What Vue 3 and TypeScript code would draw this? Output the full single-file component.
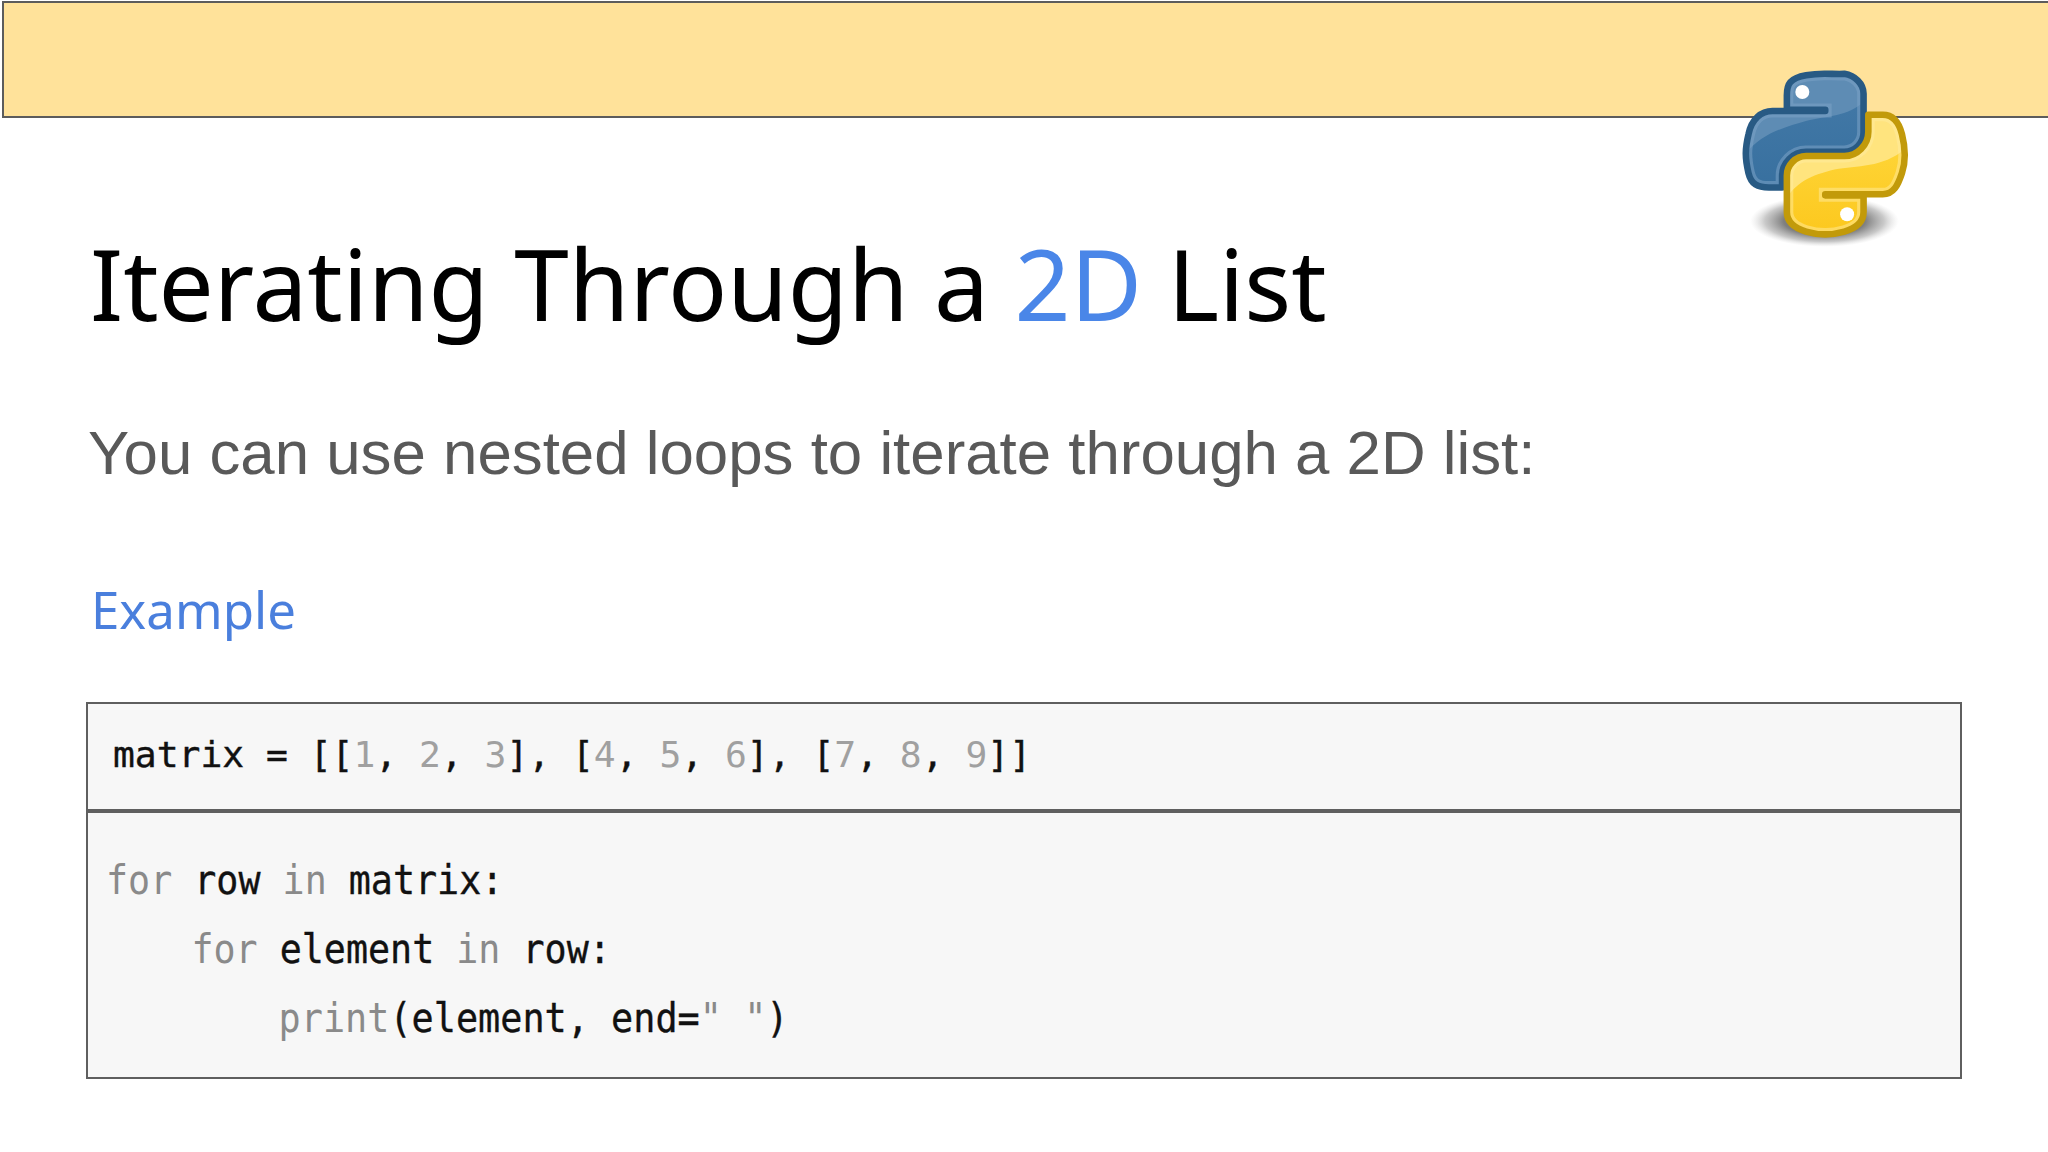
<script setup lang="ts">
const blue = "M54.92 0C50.34.02 45.96.41 42.11 1.09 30.76 3.1 28.7 7.29 28.7 15.03v10.22h26.81v.8H18.64c-7.79 0-14.62 5.5-16.75 16.2-2.46 10.21-2.57 16.59 0 27.25 1.91 7.94 6.46 10 14.25 10h9.22v-8.25c0-8.85 7.66-16.66 16.75-16.66h26.78c7.45 0 13.41-6.14 13.41-13.62V14.03c0-7.27-6.13-12.72-13.41-13.94C64.28.33 59.5-.02 54.92 0Z";
const yellow = "M85.64 28.66v11.9c0 9.23-7.83 17-16.75 17H42.11c-7.34 0-13.41 6.28-13.41 13.63v25.53c0 7.27 6.32 11.54 13.41 13.62 8.49 2.5 16.63 2.95 26.78 0 6.75-1.95 13.41-5.88 13.41-13.62V85H55.52v-.8h40.19c7.79 0 10.7-6.54 13.41-14.7 2.8-8.4 2.74-16.48 0-27.25-1.93-7.76-5.6-13.59-13.41-13.59Z";
</script>

<template>
  <main class="slide">
    <div class="banner"></div>
    <svg class="logo" viewBox="-4 -4 118 130" aria-hidden="true">
      <defs>
        <clipPath id="cb"><path :d="blue" /></clipPath>
        <clipPath id="cy"><path :d="yellow" /></clipPath>
        <radialGradient id="sh" cx="50%" cy="50%" r="50%">
          <stop offset="0" stop-color="#555" />
          <stop offset=".55" stop-color="#808080" />
          <stop offset=".8" stop-color="#bbb" stop-opacity=".8" />
          <stop offset="1" stop-color="#ddd" stop-opacity="0" />
        </radialGradient>
        <linearGradient id="gb" x1="0" y1="0" x2="0" y2="1">
          <stop offset="0" stop-color="#447aa8" />
          <stop offset="1" stop-color="#38709f" />
        </linearGradient>
        <linearGradient id="gy" x1="0" y1="0" x2="0" y2="1">
          <stop offset="0" stop-color="#ffd93f" />
          <stop offset="1" stop-color="#fcc81e" />
        </linearGradient>
      </defs>
      <ellipse cx="55" cy="103" rx="52" ry="18" fill="url(#sh)" />
      <path :d="blue" fill="url(#gb)" />
      <g clip-path="url(#cb)">
        <path d="M0 56C10 42 28 37 42 33 58 29 72 30 84 18V-4H-4V56Z" fill="#5e8cb4" />
        <path :d="blue" fill="none" stroke="#7ba3c6" stroke-width="9" opacity=".55" />
      </g>
      <path :d="blue" fill="none" stroke="#285a84" stroke-width="4.6" stroke-linejoin="round" />
      <path :d="yellow" fill="url(#gy)" />
      <g clip-path="url(#cy)">
        <path d="M28 88C36 74 50 70 62 67 78 64 96 66 112 52V20H28Z" fill="#ffe47e" />
        <path :d="yellow" fill="none" stroke="#ffeb9f" stroke-width="9" opacity=".5" />
      </g>
      <path :d="yellow" fill="none" stroke="#c29a0a" stroke-width="4.6" stroke-linejoin="round" />
      <circle cx="39.5" cy="12.8" r="4.9" fill="#fff" />
      <circle cx="70.8" cy="98.2" r="4.9" fill="#fff" />
    </svg>

    <section class="content">
      <h1 class="title">Iterating Through a <span class="accent">2D</span> List</h1>
      <p class="lead">You can use nested loops to iterate through a 2D list:</p>
      <h2 class="example">Example</h2>

      <div class="code">
        <div class="code-top"><code>matrix = [[<i>1</i>, <i>2</i>, <i>3</i>], [<i>4</i>, <i>5</i>, <i>6</i>], [<i>7</i>, <i>8</i>, <i>9</i>]]</code></div>
        <div class="code-bottom">
          <code class="tall"><i>for</i> row <i>in</i> matrix:</code>
          <code class="tall indent-1"><i>for</i> element <i>in</i> row:</code>
          <code class="tall indent-2 wider"><i>print</i>(element, end=<i>"</i> <i>"</i>)</code>
        </div>
      </div>
    </section>
  </main>
</template>

<style>
html, body { margin: 0; background: #fff; }
</style>

<style scoped>
.slide {
  position: relative;
  width: 2048px;
  height: 1152px;
  overflow: hidden;
  background: #fff;
}
.banner {
  box-sizing: border-box;
  height: 117px;
  margin: 1px 0 0 2px;
  background: #ffe29a;
  border: 2px solid #5c5c5c;
  border-right: 0;
}
.logo {
  position: absolute;
  left: 1740px;
  top: 68px;
  width: 169px;
  height: 186px;
}
.content {
  padding-left: 86px;
  width: 1876px;
}
.title {
  margin: 105px 0 0 4px;
  font: 400 98px/120px "Noto Sans", sans-serif;
  color: #000;
  white-space: nowrap;
}
.accent { color: #4a86e8; }
.lead {
  margin: 70px 0 0 2px;
  font: 400 61.8px/80px "Liberation Sans", Arial, sans-serif;
  color: #595959;
  white-space: nowrap;
}
.example {
  margin: 81px 0 0 5px;
  font: 400 51px/70px "Noto Sans", sans-serif;
  color: #4a7fdd;
}
.code {
  box-sizing: border-box;
  margin-top: 58px;
  width: 1876px;
  height: 377px;
  background: #f7f7f7;
  border: 2px solid #5f5f5f;
}
.code-top {
  box-sizing: border-box;
  height: 109px;
  padding: 26px 0 0 25px;
  border-bottom: 4px solid #5f5f5f;
}
.code-bottom {
  display: flex;
  flex-direction: column;
  padding: 33px 0 0 18px;
}
code {
  font-family: "DejaVu Sans Mono", monospace;
  font-size: 36.3px;
  line-height: 50px;
  color: #111;
  white-space: pre;
  -webkit-text-stroke: 0.4px #111;
}
.tall {
  display: block;
  height: 69px;
  font-size: 41.2px;
  line-height: 69px;
  transform: scaleX(0.89);
  transform-origin: left center;
}
.wider { transform: scaleX(0.894); }
.indent-1 { padding-left: 96px; }
.indent-2 { padding-left: 193px; }
i {
  font-style: normal;
  color: #a0a0a0;
  -webkit-text-stroke: 0;
}
.tall i { color: #8a8a8a; }
</style>
